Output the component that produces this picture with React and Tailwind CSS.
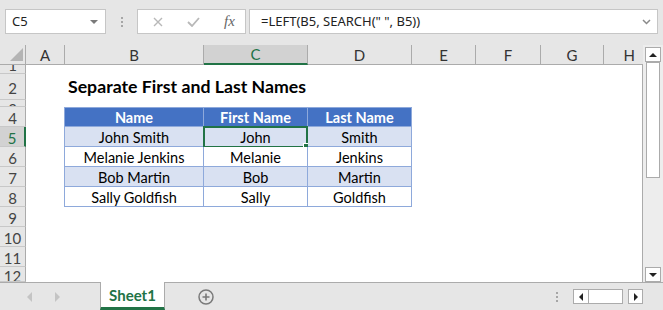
import React from 'react';

const cols = [
  { key: 'A', w: 'w-[39px]' },
  { key: 'B', w: 'w-[139px]' },
  { key: 'C', w: 'w-[104px]' },
  { key: 'D', w: 'w-[104px]' },
  { key: 'E', w: 'w-[64px]' },
  { key: 'F', w: 'w-[65px]' },
  { key: 'G', w: 'w-[63px]' },
  { key: 'H', w: 'flex-1' },
];

const rows = [
  { n: 1, h: 'h-[9px]', clip: 'end' },
  { n: 2, h: 'h-[26px]' },
  { n: 3, h: 'h-[7px]', clip: 'start' },
  { n: 4, h: 'h-[20px]' },
  { n: 5, h: 'h-[20px]' },
  { n: 6, h: 'h-[20px]' },
  { n: 7, h: 'h-[20px]' },
  { n: 8, h: 'h-[20px]' },
  { n: 9, h: 'h-[20px]' },
  { n: 10, h: 'h-[20px]' },
  { n: 11, h: 'h-[20px]' },
  { n: 12, h: 'h-[15px]', clip: 'start' },
];

const table = {
  4: ['Name', 'First Name', 'Last Name'],
  5: ['John Smith', 'John', 'Smith'],
  6: ['Melanie Jenkins', 'Melanie', 'Jenkins'],
  7: ['Bob Martin', 'Bob', 'Martin'],
  8: ['Sally Goldfish', 'Sally', 'Goldfish'],
};

const cellFont = { fontFamily: 'Lato, "Open Sans", sans-serif' };

function RowHeader({ row }) {
  const active = row.n === 5;
  let align = 'items-center';
  if (row.clip === 'end') align = 'items-end';
  if (row.clip === 'start') align = 'items-start';
  return (
    <div
      className={`w-[26px] shrink-0 ${row.h} overflow-hidden flex justify-center ${align} border-b border-[#c8c8c8] ${
        active ? 'bg-[#d2d2d2] border-r-2 border-r-[#217346] text-[#217346]' : 'bg-[#e6e6e6] border-r border-r-[#ababab] text-[#444]'
      }`}
    >
      <div className={`h-[20px] shrink-0 flex items-center pt-[4px] text-[15px] leading-none ${row.n === 3 || row.n === 12 ? '-mt-[3px]' : ''}`}>
        {row.n}
      </div>
    </div>
  );
}

function SheetRow({ row }) {
  const data = table[row.n];
  const isHead = row.n === 4;
  const band = row.n === 5 || row.n === 7;
  return (
    <div className={`flex ${row.h}`}>
      <RowHeader row={row} />
      {cols.map((c, i) => {
        if (row.n === 2 && c.key === 'B') {
          return (
            <div key={c.key} className={`${c.w} shrink-0 relative`}>
              <div className="absolute left-[3px] bottom-[4px] whitespace-nowrap text-[17.7px] font-bold leading-none text-black">
                Separate First and Last Names
              </div>
            </div>
          );
        }
        if (data && i >= 1 && i <= 3) {
          const bg = isHead ? 'bg-[#4472c4] text-white font-bold' : band ? 'bg-[#d9e1f2] text-black' : 'bg-white text-black';
          const selected = row.n === 5 && c.key === 'C';
          return (
            <div
              key={c.key}
              className={`${c.w} shrink-0 relative flex items-end justify-center pb-[1px] text-[14.5px] leading-none border-r border-b border-[#8ea9db] ${bg} ${
                isHead ? 'border-t' : ''
              }`}
            >
              <span>{data[i - 1]}</span>
              {selected && (
                <div className="absolute -left-[1px] -right-[1px] -top-[1px] -bottom-[2px] border-2 border-[#217346]">
                  <div className="absolute -right-[4px] -bottom-[4px] w-[7px] h-[7px] bg-[#217346] border border-white" />
                </div>
              )}
            </div>
          );
        }
        if (data && c.key === 'A') {
          return <div key={c.key} className={`${c.w} shrink-0 border-r border-[#8ea9db]`} />;
        }
        return <div key={c.key} className={`${c.w} shrink-0`} />;
      })}
    </div>
  );
}

function ColHeader() {
  return (
    <div className="flex h-[20px]">
      <div className="w-[26px] shrink-0 relative border-r border-b border-[#ababab]">
        <svg className="absolute left-[10px] top-[3px]" width="13" height="13" viewBox="0 0 13 13">
          <path d="M13 0 L13 13 L0 13 Z" fill="#b4b4b4" />
        </svg>
      </div>
      {cols.map((c) => {
        const active = c.key === 'C';
        return (
          <div
            key={c.key}
            className={`${c.w} shrink-0 flex items-center justify-center pt-[1px] text-[15px] leading-none ${
              active
                ? 'bg-[#d2d2d2] text-[#217346] border-r border-r-[#ababab] border-b-2 border-b-[#217346]'
                : 'text-[#333] border-r border-b border-[#ababab]'
            } ${c.key === 'H' ? 'justify-end pr-[8px] border-r-0' : ''}`}
          >
            {c.key}
          </div>
        );
      })}
    </div>
  );
}

function Triangle({ dir, color = '#333', size = 4 }) {
  const paths = {
    up: `M0 ${size} L${size} 0 L${size * 2} ${size} Z`,
    down: `M0 0 L${size * 2} 0 L${size} ${size} Z`,
    left: `M${size} 0 L${size} ${size * 2} L0 ${size} Z`,
    right: `M0 0 L0 ${size * 2} L${size} ${size} Z`,
  };
  const vertical = dir === 'up' || dir === 'down';
  const w = vertical ? size * 2 : size;
  const h = vertical ? size : size * 2;
  return (
    <svg width={w} height={h} viewBox={`0 0 ${w} ${h}`}>
      <path d={paths[dir]} fill={color} />
    </svg>
  );
}

function Dots() {
  return (
    <div className="flex flex-col gap-[2px]">
      <div className="w-[2px] h-[2px] bg-[#a6a6a6]" />
      <div className="w-[2px] h-[2px] bg-[#a6a6a6]" />
      <div className="w-[2px] h-[2px] bg-[#a6a6a6]" />
    </div>
  );
}

export default function App() {
  return (
    <div
      className="w-[663px] h-[310px] overflow-hidden bg-[#e6e6e6] flex flex-col text-[#222]"
      style={cellFont}
    >
      {/* formula bar */}
      <div
        className="h-[45px] shrink-0 flex items-start pt-[9px] text-[13px]"
        style={{ fontFamily: '"Noto Sans", "Open Sans", sans-serif' }}
      >
        <div className="ml-[5px] w-[101px] h-[25px] bg-white border border-[#c6c6c6] flex items-center justify-between pl-[6px] pr-[7px]">
          <span className="text-[#222]">C5</span>
          <Triangle dir="down" color="#7a7a7a" size={4} />
        </div>
        <div className="ml-[15px] mt-[8px]">
          <Dots />
        </div>
        <div className="ml-[14px] w-[109px] h-[25px] bg-white border border-[#c6c6c6] flex items-center">
          <svg className="ml-[15px]" width="10" height="10" viewBox="0 0 10 10">
            <path d="M1 1 L9 9 M9 1 L1 9" stroke="#b8b8b8" strokeWidth="1.4" />
          </svg>
          <svg className="ml-[24px]" width="13" height="10" viewBox="0 0 13 10">
            <path d="M1 5 L5 9 L12 1" stroke="#b8b8b8" strokeWidth="1.8" fill="none" />
          </svg>
          <span
            className="ml-[24px] text-[15px] italic text-[#666] leading-none"
            style={{ fontFamily: '"Liberation Serif", serif' }}
          >
            fx
          </span>
        </div>
        <div className="ml-[3px] w-[409px] h-[25px] bg-white border border-[#c6c6c6] flex items-center justify-between pl-[11px] pr-[6px]">
          <span className="text-[13px] text-[#222]">=LEFT(B5, SEARCH(" ", B5))</span>
          <svg width="9" height="6" viewBox="0 0 9 6">
            <path d="M1 1 L4.5 4.5 L8 1" stroke="#8a8a8a" strokeWidth="1.5" fill="none" />
          </svg>
        </div>
      </div>

      {/* sheet */}
      <div className="flex h-[237px] shrink-0">
        <div className="w-[643px] flex flex-col">
          <ColHeader />
          <div className="flex-1 bg-white border-r border-[#ababab] overflow-hidden">
            {rows.map((r) => (
              <SheetRow key={r.n} row={r} />
            ))}
          </div>
        </div>
        <div className="w-[20px] bg-[#ededed] flex flex-col items-center pt-[2px]">
          <div className="w-[16px] h-[15px] bg-white border border-[#ababab] flex items-center justify-center">
            <Triangle dir="up" color="#222" size={4} />
          </div>
          <div className="w-[14px] h-[116px] bg-white border border-[#ababab]" />
          <div className="flex-1" />
          <div className="w-[16px] h-[15px] bg-white border border-[#ababab] flex items-center justify-center">
            <Triangle dir="down" color="#222" size={4} />
          </div>
        </div>
      </div>

      {/* sheet tabs */}
      <div className="flex-1 flex items-stretch border-t border-[#ababab]">
        <div className="flex items-center w-[100px] pl-[27px] gap-[23px]">
          <Triangle dir="left" color="#c4c4c4" size={5} />
          <Triangle dir="right" color="#c4c4c4" size={5} />
        </div>
        <div className="-mt-[1px] w-[65px] bg-white border-x border-[#ababab] border-b-[3px] border-b-[#217346] flex items-center justify-center text-[15px] font-bold text-[#217346] pt-[2px]">
          Sheet1
        </div>
        <div className="ml-[33px] flex items-center">
          <svg width="16" height="16" viewBox="0 0 16 16">
            <circle cx="8" cy="8" r="7" stroke="#7a7a7a" strokeWidth="1.5" fill="none" />
            <path d="M8 4.5 V11.5 M4.5 8 H11.5" stroke="#7a7a7a" strokeWidth="1.6" />
          </svg>
        </div>
        <div className="flex-1" />
        <div className="flex items-center mr-[15px]">
          <Dots />
        </div>
        <div className="flex items-center mr-[20px]">
          <div className="w-[16px] h-[15px] bg-white border border-[#ababab] flex items-center justify-center">
            <Triangle dir="left" color="#222" size={4} />
          </div>
          <div className="w-[34px] h-[15px] bg-white border border-[#ababab] border-l-0" />
          <div className="w-[5px] h-[15px] bg-[#e6e6e6]" />
          <div className="w-[15px] h-[15px] bg-white border border-[#ababab] flex items-center justify-center">
            <Triangle dir="right" color="#222" size={4} />
          </div>
        </div>
      </div>
    </div>
  );
}
